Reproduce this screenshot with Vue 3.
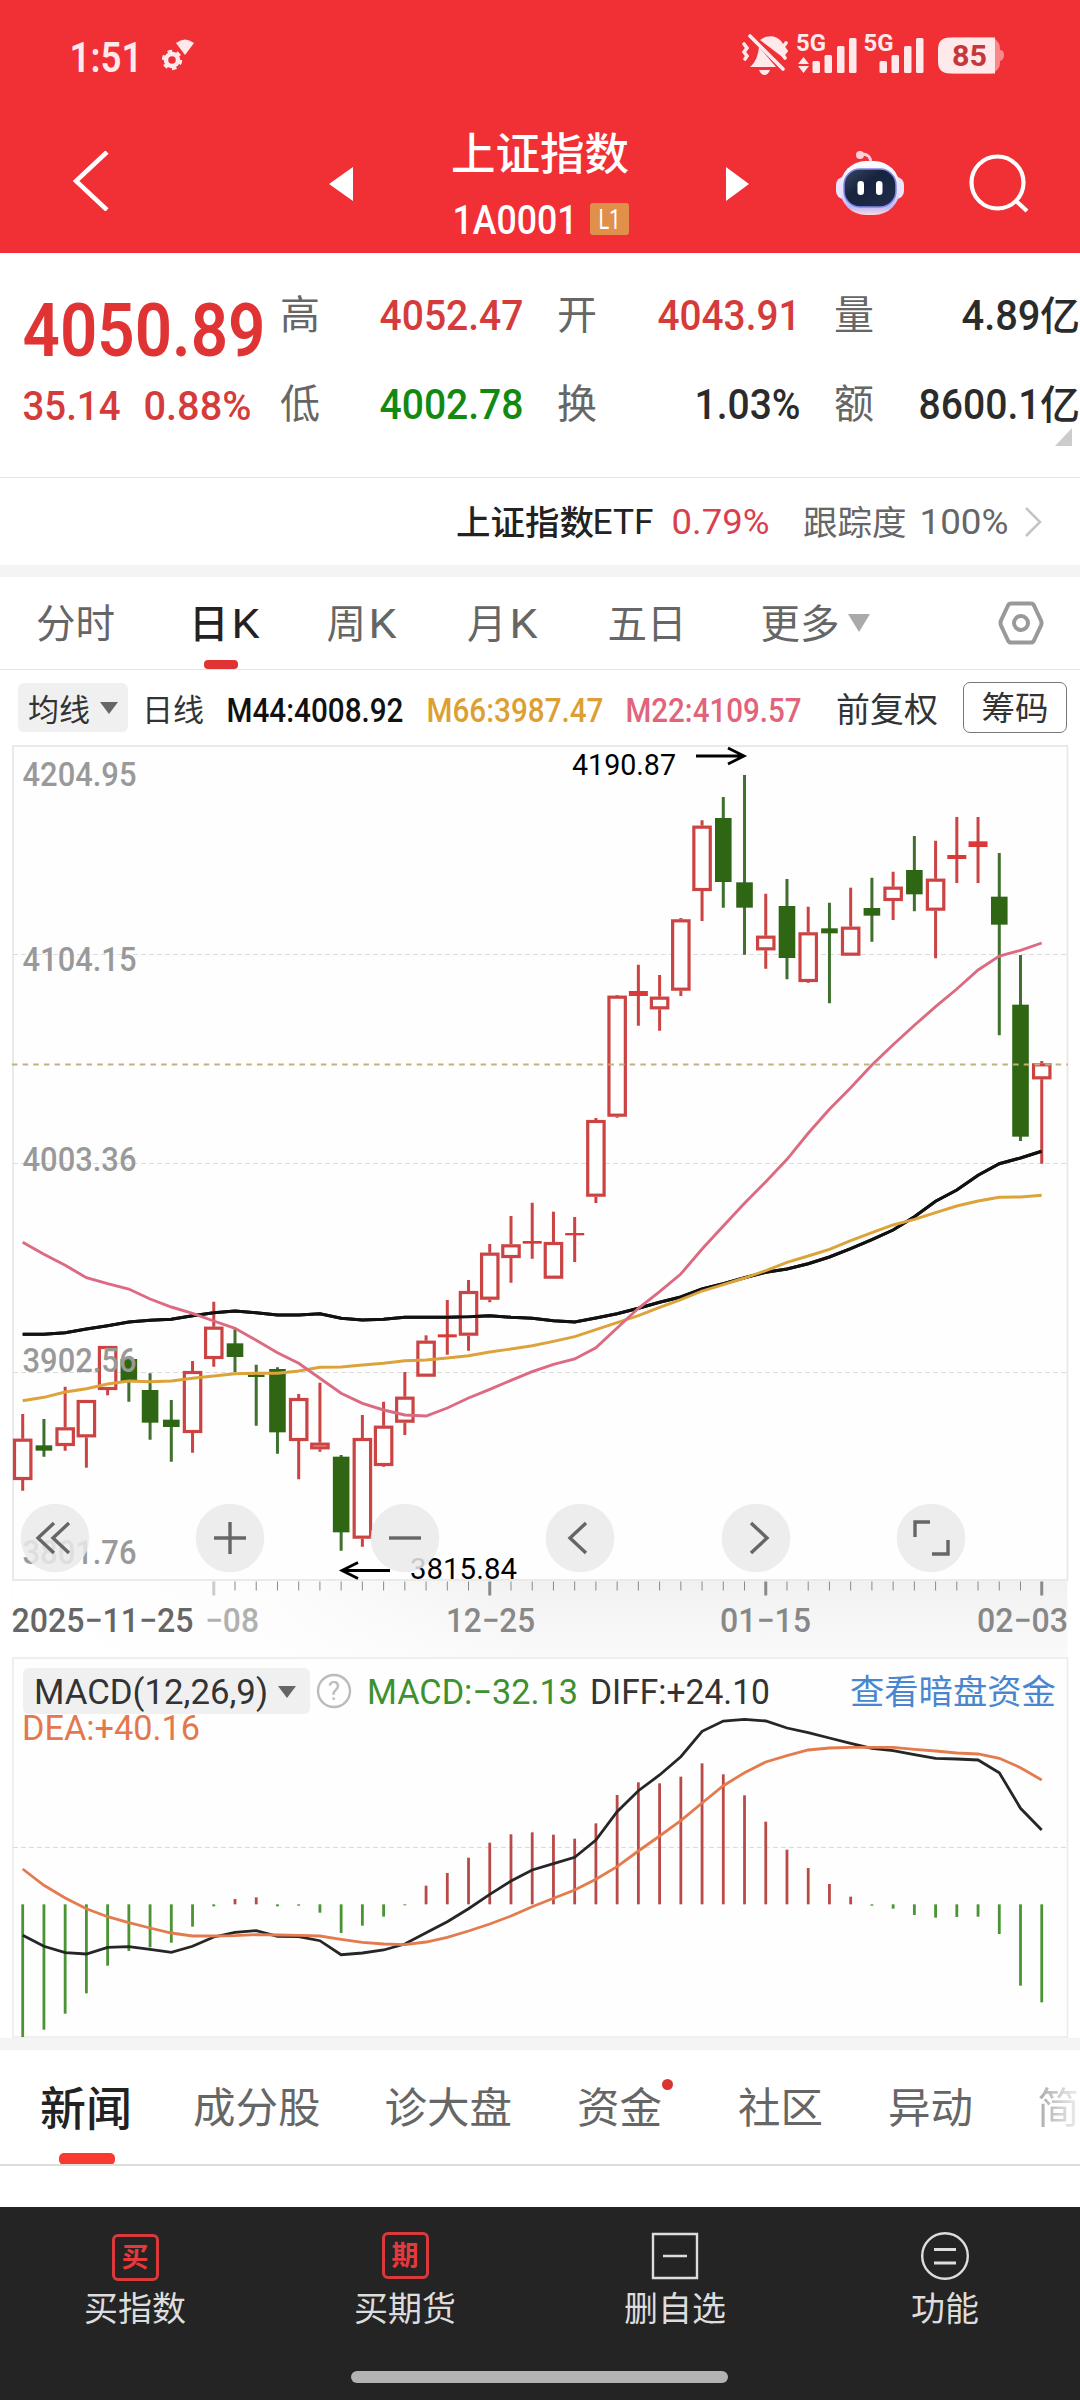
<script setup>
import { h } from 'vue'

/* Condensed figure: text set to an exact width and cap height. */
const Fig = (p) =>
  h('svg', { width: p.w, height: p.cap, class: 'fig' }, [
    h('text', {
      x: -1.5, y: p.cap, fill: 'currentColor',
      'font-size': p.cap / 0.711,
      'font-weight': p.weight || 500,
      textLength: p.w + 3, lengthAdjust: 'spacingAndGlyphs'
    }, p.t)
  ])
Fig.props = ['t', 'w', 'cap', 'weight']

const pitch = 21.23
const cx = (i) => 22.7 + i * pitch

/* kind, high, body top, body bottom, low (thirds of a pixel) */
const lower = [
  ['r', 642, 716, 840, 872], ['g', 657, 736, 752, 770], ['r', 560, 682, 738, 752], ['r', 600, 600, 712, 803],
  ['r', 438, 438, 570, 586], ['g', 477, 477, 545, 605], ['g', 520, 570, 668, 719], ['g', 600, 659, 681, 785],
  ['r', 483, 513, 699, 758], ['r', 305, 380, 477, 500], ['g', 388, 430, 471, 517], ['g', 494, 524, 531, 677],
  ['g', 502, 507, 697, 761], ['r', 582, 594, 723, 838], ['r', 548, 728, 748, 755], ['g', 765, 770, 997, 1052],
  ['r', 645, 714, 1016, 1040], ['r', 605, 677, 798, 800], ['r', 516, 590, 668, 705], ['r', 406, 422, 530, 530],
  ['r', 300, 403, 412, 464], ['r', 240, 273, 407, 452], ['r', 132, 158, 299, 307], ['r', 48, 133, 174, 248],
  ['r', 8, 123, 131, 176], ['r', 35, 126, 236, 236], ['r', 51, 99, 106, 186]
]
const upper = [
  ['r', 1134, 1140, 1370, 1389], ['r', 765, 767, 1130, 1133], ['r', 674, 753, 768, 857], ['r', 705, 770, 808, 872],
  ['r', 534, 538, 752, 768], ['r', 241, 257, 453, 543], ['g', 171, 234, 426, 503], ['g', 105, 427, 503, 644],
  ['r', 461, 587, 631, 686], ['g', 417, 498, 654, 718], ['r', 500, 577, 726, 728], ['g', 488, 565, 580, 790],
  ['r', 443, 560, 647, 647], ['g', 413, 504, 527, 605], ['r', 395, 440, 483, 540], ['g', 288, 390, 463, 514],
  ['r', 302, 416, 512, 655], ['r', 231, 345, 357, 429], ['r', 231, 304, 321, 429], ['g', 339, 470, 554, 886],
  ['g', 645, 794, 1190, 1203], ['r', 963, 970, 1018, 1271]
]
const scale = (rows, base) => rows.map(([k, ...v]) => [k, ...v.map((n) => base + n / 3)])
const candles = [...scale(lower, 1200), ...scale(upper, 740)].map(([k, hi, t, b, lo], i) => ({
  k, hi, t, b, lo, x: cx(i), hollow: k === 'r' && b - t > 6
}))

const line = (vals, base) => vals.map((v, i) => `${cx(i).toFixed(1)},${(base + v / 3).toFixed(1)}`).join(' ')
const m44 = line([403, 403, 398, 387, 377, 366, 361, 358, 347, 338, 333, 338, 345, 345, 341, 355, 360, 358, 352, 352, 352, 350, 347, 352, 355, 362, 366, 354, 341, 325, 307, 291, 267, 251, 233, 217, 207, 191, 171, 146, 119, 90, 50, 4, -30, -74, -109, -126, -146], 1200)
const m66 = line([602, 592, 576, 566, 552, 543, 545, 543, 535, 528, 521, 520, 520, 513, 502, 501, 495, 490, 482, 480, 474, 467, 456, 447, 437, 424, 410, 389, 368, 347, 322, 299, 273, 254, 234, 212, 187, 168, 148, 122, 98, 75, 58, 38, 18, 3, -8, -9, -14], 1200)
const m22 = line([127, 163, 196, 233, 251, 267, 297, 321, 340, 363, 385, 421, 458, 490, 535, 580, 610, 630, 645, 648, 624, 594, 568, 541, 515, 493, 477, 443, 384, 325, 275, 222, 147, 78, 10, -55, -122, -200, -272, -337, -405, -466, -524, -580, -633, -690, -732, -749, -771], 1200)

const bars = [1161, 1139, 1091, 1030, 947, 903, 892, 878, 830, 769, 747, 742, 769, 767, 788, 849, 827, 800, 765, 707, 669, 623, 578, 553, 547, 554, 566, 520, 435, 397, 400, 380, 340, 373, 436, 515, 599, 654, 702, 740, 767, 776, 795, 803, 801, 800, 852, 1007, 1057]
  .map((v, i) => ({ x: cx(i), y: Math.min(v, 763) / 3 + 1650, h: Math.max(Math.abs(v - 763) / 3, 1), up: v < 763 }))
const diff = line([856, 889, 908, 912, 892, 890, 898, 907, 889, 861, 847, 842, 859, 860, 872, 914, 909, 900, 882, 848, 815, 776, 733, 693, 660, 641, 622, 570, 485, 422, 375, 320, 244, 213, 208, 213, 234, 248, 264, 280, 295, 302, 314, 325, 327, 330, 368, 475, 540], 1650)
const dea = line([657, 706, 744, 776, 800, 818, 834, 849, 858, 858, 857, 854, 855, 856, 858, 868, 877, 882, 884, 876, 862, 843, 822, 798, 770, 745, 720, 688, 650, 603, 558, 512, 459, 407, 368, 336, 317, 300, 294, 292, 292, 292, 298, 303, 309, 312, 325, 353, 390], 1650)

const ticks = Array.from({ length: 40 }, (_, n) => n + 9).map((i) => ({ x: cx(i), big: (i - 9) % 13 === 0, pale: i === 9 }))
const grid = [954, 1163, 1372]
const scaleLabels = [
  { t: '4204.95', y: 786 }, { t: '4104.15', y: 971 }, { t: '4003.36', y: 1171 }, { t: '3902.56', y: 1371.5 }, { t: '3801.76', y: 1564 }
]
const controls = [
  'M54 -15 L38 0 L54 15 M69 -15 L53 0 L69 15',
  'M214 0 H246 M230 -16 V16',
  'M389 0 H421',
  'M586 -15 L570 0 L586 15',
  'M751 -15 L767 0 L751 15',
  'M915 -1 V-16 H930 M932 16 H948 V2'
]
const buttonX = [55, 230, 405, 580, 756, 931]
</script>

<template>
  <main class="screen">
    <header class="top">
      <div class="status">
        <Fig t="1:51" :w="70" :cap="30" weight="600" class="clock" />
        <svg class="gear" width="34" height="34" viewBox="0 0 34 34">
          <circle cx="10" cy="21" r="6" fill="none" stroke="#ffe9ea" stroke-width="4.5" />
          <circle cx="10" cy="21" r="8.7" fill="none" stroke="#ffe9ea" stroke-width="3" stroke-dasharray="4.5 4.6" />
          <path d="M14 4q9-7 18 0l-9 12z" fill="#ffe9ea" />
        </svg>
        <svg class="signals" width="270" height="46" viewBox="738 30 270 46" fill="#ffe9ea">
          <path d="M750 67c6-5 8-12 9-20l17 20zM760 40c13-9 25 0 25 12v7zM759 70h11q-2 5-5.500 5t-5.500-5z" />
          <path d="M750 36l33 33M744 44l3 4-3 4 3 4-2 3M786 43l-3 4 3 4-3 4 2 3" fill="none" stroke="#ffe9ea" stroke-width="3.600" stroke-linecap="round" />
          <text x="796" y="50.500" font-size="23" font-weight="700" textLength="30" lengthAdjust="spacingAndGlyphs">5G</text>
          <text x="863.500" y="50.500" font-size="23" font-weight="700" textLength="30" lengthAdjust="spacingAndGlyphs">5G</text>
          <path d="M798 64l5.500-7 5.500 7zM798 66l5.500 7 5.500-7z" />
          <g v-for="o in [0, 67]" :key="o">
            <rect :x="812.500 + o" y="61" width="7.500" height="12" rx="1.500" /><rect :x="824.500 + o" y="55" width="7.500" height="18" rx="1.500" />
            <rect :x="837 + o" y="46" width="7.500" height="27" rx="1.500" /><rect :x="849 + o" y="38" width="7.500" height="35" rx="1.500" />
          </g>
          <path d="M995 50h5q4 0 4 5t-4 6h-5z" fill="#f8888a" />
          <rect x="944" y="37.500" width="56" height="36" rx="11" fill="#f8888a" />
          <path d="M950 37.500h45v36h-45q-12 0-12-12v-12q0-12 12-12z" />
          <text x="952" y="66" font-size="30" font-weight="700" fill="#c4373c" textLength="35" lengthAdjust="spacingAndGlyphs">85</text>
        </svg>
      </div>
      <div class="nav">
        <svg class="back" width="36" height="60" viewBox="0 0 36 60"><path d="M34 1L3 30l31 29" fill="none" stroke="#fff" stroke-width="4.500" /></svg>
        <svg class="prev" width="24" height="34"><path d="M24 0v34L0 17z" fill="#fff" /></svg>
        <div class="title">
          <h1>上证指数</h1>
          <div class="code"><Fig t="1A0001" :w="122" :cap="29" /><span class="badge"><Fig t="L1" :w="19" :cap="19" weight="400" /></span></div>
        </div>
        <svg class="next" width="23" height="34"><path d="M0 0v34l23-17z" fill="#fff" /></svg>
        <svg class="robot" width="70" height="66" viewBox="0 0 70 66">
          <defs>
            <linearGradient id="shell" x1="0" y1="0" x2="0" y2="1"><stop offset="0" stop-color="#fff" /><stop offset=".6" stop-color="#e6defa" /><stop offset=".85" stop-color="#b9b8fa" /><stop offset="1" stop-color="#ffd9de" /></linearGradient>
            <linearGradient id="visor" x1="0" y1="0" x2="1" y2="1"><stop offset="0" stop-color="#3a4863" /><stop offset=".4" stop-color="#18243e" /><stop offset="1" stop-color="#202d4a" /></linearGradient>
          </defs>
          <path d="M25 4q11-1 11 10" fill="none" stroke="#f9d4e4" stroke-width="3" /><circle cx="25" cy="5" r="4" fill="#ffd0d8" />
          <rect x="1" y="27" width="68" height="22" rx="8" fill="#eae5ff" />
          <rect x="5" y="11" width="60" height="54" rx="26" fill="url(#shell)" />
          <rect x="9" y="19" width="52" height="38" rx="16" fill="url(#visor)" stroke="#8187e8" stroke-width="1.500" />
          <rect x="22.500" y="31" width="6.500" height="14" rx="3.200" fill="#fff" /><rect x="41" y="31" width="6.500" height="14" rx="3.200" fill="#fff" />
        </svg>
        <svg class="search" width="60" height="60" viewBox="0 0 60 60"><g fill="none" stroke="#fff" stroke-width="4.200"><circle cx="28.500" cy="28.500" r="26" /><path d="M46 46l12 11" /></g></svg>
      </div>
    </header>

    <section class="quote">
      <div class="price">
        <Fig t="4050.89" :w="240" :cap="53" weight="600" />
        <div class="chg"><Fig t="35.14" :w="95" :cap="29" /><Fig t="0.88%" :w="105" :cap="29" /></div>
      </div>
      <div class="cell"><span>高</span><Fig t="4052.47" :w="141" :cap="30" class="red" /></div>
      <div class="cell"><span>开</span><Fig t="4043.91" :w="140" :cap="30" class="red" /></div>
      <div class="cell last"><span>量</span><Fig t="4.89" :w="76" :cap="30" /><b>亿</b></div>
      <div class="cell"><span>低</span><Fig t="4002.78" :w="141" :cap="30" class="green" /></div>
      <div class="cell"><span>换</span><Fig t="1.03%" :w="103" :cap="30" /></div>
      <div class="cell last"><span>额</span><Fig t="8600.1" :w="119" :cap="30" /><b>亿</b></div>
      <svg class="corner" width="17" height="18"><path d="M17 0v18H0z" fill="#ccc" /></svg>
    </section>

    <section class="etf">
      <span class="name">上证指数</span><Fig t="ETF" :w="58" :cap="25" weight="400" class="name" />
      <Fig t="0.79%" :w="95" :cap="25" weight="400" class="rate" />
      <span class="track">跟踪度</span><Fig t="100%" :w="86" :cap="25" weight="400" />
      <svg class="more" width="17" height="30"><path d="M1 1l14 14L1 29" fill="none" stroke="#c4c4c4" stroke-width="2.500" /></svg>
    </section>

    <nav class="periods">
      <span class="p1"><em>分时</em></span>
      <span class="p2 on"><em>日</em><Fig t="K" :w="25" :cap="29" weight="400" /></span>
      <span class="p3"><em>周</em><Fig t="K" :w="25" :cap="29" weight="400" /></span>
      <span class="p4"><em>月</em><Fig t="K" :w="25" :cap="29" weight="400" /></span>
      <span class="p5"><em>五日</em></span>
      <span class="p6"><em>更多</em><svg width="22" height="18"><path d="M0 0h22L11 18z" fill="#aaa" /></svg></span>
      <svg class="hex" width="46" height="44" viewBox="0 0 46 44"><g fill="none" stroke="#999" stroke-width="4"><path d="M13 2.500h20q2 0 3 2l7 15q1 2.500 0 5l-7 15q-1 2-3 2H13q-2 0-3-2L3 24.500q-1-2.500 0-5l7-15q1-2 3-2z" /><circle cx="23" cy="22" r="7" /></g></svg>
    </nav>

    <section class="averages">
      <span class="drop">均线<svg width="18" height="12"><path d="M0 0h18L9 12z" fill="#666" /></svg></span>
      <span class="day">日线</span>
      <Fig t="M44:4008.92" :w="174" :cap="23" class="a44" />
      <Fig t="M66:3987.47" :w="174" :cap="23" class="a66" />
      <Fig t="M22:4109.57" :w="173" :cap="23" class="a22" />
      <span class="adj">前复权</span>
      <span class="chip">筹码</span>
    </section>

    <svg class="chart" width="1080" height="1306" viewBox="0 744 1080 1306">
      <defs>
        <linearGradient id="axis" x1="0" y1="0" x2="0" y2="1"><stop offset="0" stop-color="#f1f1f1" /><stop offset="1" stop-color="#fafafa" /></linearGradient>
        <linearGradient id="axisFade" x1="0" y1="0" x2="1" y2="0"><stop offset="0" stop-color="#fff" /><stop offset=".25" stop-color="#fff" stop-opacity=".8" /><stop offset=".5" stop-color="#fff" stop-opacity="0" /></linearGradient>
      </defs>
      <rect x="0" y="2038" width="1080" height="12" fill="#f4f4f4" />
      <rect x="12.500" y="1581" width="1055" height="76" fill="url(#axis)" />
      <rect x="12.500" y="1581" width="1055" height="76" fill="url(#axisFade)" />
      <rect x="13" y="746" width="1054.500" height="834" fill="#fefefe" stroke="#e8e8e8" stroke-width="1.800" />
      <path v-for="y in grid" :key="y" :d="`M13 ${y}.500H1067`" stroke="#dcdcdc" stroke-dasharray="5 3" />

      <polyline :points="m44" fill="none" stroke="#111" stroke-width="3" />
      <g v-for="(c, i) in candles" :key="i" :class="c.k">
        <path :d="`M${c.x} ${c.hi}V${c.hollow ? c.t : c.lo}M${c.x} ${c.b}V${c.lo}`" class="wick" />
        <rect v-if="c.hollow" :x="c.x - 8.200" :y="c.t + 1.500" width="16.400" :height="c.b - c.t - 3" class="hollow" />
        <rect v-else :x="c.x - (c.k === 'r' ? 9.500 : 8.300)" :y="c.t" :width="c.k === 'r' ? 19 : 16.600" :height="c.b - c.t" class="solid" />
      </g>
      <polyline :points="m44" fill="none" stroke="#111" stroke-width="3" />
      <polyline :points="m66" fill="none" stroke="#dba33a" stroke-width="2.900" />
      <polyline :points="m22" fill="none" stroke="#dc6a80" stroke-width="2.900" />
      <path d="M12 1064.500H1068" stroke="#c2b27c" stroke-width="1.800" stroke-dasharray="5.500 5.150" />

      <g fill="#999" font-weight="500" font-size="34">
        <text v-for="l in scaleLabels" :key="l.t" x="22.500" :y="l.y" textLength="114" lengthAdjust="spacingAndGlyphs">{{ l.t }}</text>
      </g>
      <g font-size="29.500" fill="#000">
        <text x="572" y="775" textLength="104" lengthAdjust="spacingAndGlyphs">4190.87</text>
        <text x="410" y="1579" textLength="107" lengthAdjust="spacingAndGlyphs">3815.84</text>
        <path d="M696 756h47M728 748l16 8-16 8M390 1570.500h-48M358 1562.500l-16 8 16 8" fill="none" stroke="#000" stroke-width="2.800" />
      </g>

      <circle v-for="x in buttonX" :key="x" :cx="x" cy="1538" r="34.300" fill="#eaeaea" fill-opacity=".85" />
      <path v-for="d in controls" :key="d" :d="d" transform="translate(0 1538)" fill="none" stroke="#666" stroke-width="3.400" />

      <path v-for="t in ticks" :key="t.x" :d="`M${t.x} 1581.500v${t.big ? 14 : 9}`" :stroke="t.pale ? '#ccc' : '#8a8a8a'" :stroke-width="t.big ? 3 : 1" />
      <g font-size="34" font-weight="500" fill="#888">
        <text x="205" y="1632" fill="#b0b0b0" textLength="54" lengthAdjust="spacingAndGlyphs">−08</text>
        <text x="11.500" y="1632" fill="#666" textLength="182" lengthAdjust="spacingAndGlyphs">2025−11−25</text>
        <text x="446" y="1632" textLength="89" lengthAdjust="spacingAndGlyphs">12−25</text>
        <text x="720" y="1632" textLength="91" lengthAdjust="spacingAndGlyphs">01−15</text>
        <text x="977" y="1632" textLength="91" lengthAdjust="spacingAndGlyphs">02−03</text>
      </g>

      <rect x="13" y="1658" width="1054.500" height="379" fill="#fefefe" stroke="#ebebeb" stroke-width="1.600" />
      <path d="M13 1847.500H1067" stroke="#dcdcdc" stroke-dasharray="5 3" />
      <rect v-for="b in bars" :key="b.x" :x="b.x - 1.400" :y="b.y" width="2.800" :height="b.h" :fill="b.up ? '#b94a48' : '#4a9433'" />
      <polyline :points="diff" fill="none" stroke="#262626" stroke-width="2.800" />
      <polyline :points="dea" fill="none" stroke="#e37b4d" stroke-width="2.800" />
      <rect x="23" y="1668" width="287" height="46" rx="6" fill="#f0f0f0" />
      <g font-size="35">
        <text x="34" y="1704" fill="#333" textLength="234" lengthAdjust="spacingAndGlyphs">MACD(12,26,9)</text>
        <text x="367" y="1704" fill="#3e9130" textLength="211" lengthAdjust="spacingAndGlyphs">MACD:−32.13</text>
        <text x="590" y="1704" fill="#333" textLength="180" lengthAdjust="spacingAndGlyphs">DIFF:+24.10</text>
        <text x="22" y="1740" fill="#e4774c" textLength="178" lengthAdjust="spacingAndGlyphs">DEA:+40.16</text>
      </g>
      <path d="M278 1686h18l-9 12z" fill="#666" />
      <circle cx="334" cy="1691" r="16" fill="none" stroke="#bbb" stroke-width="2.400" />
      <text x="334" y="1700" font-size="26" fill="#bbb" text-anchor="middle">?</text>
      <text x="850" y="1703.500" font-size="34.300" class="cjk" fill="#4a86d0">查看暗盘资金</text>
    </svg>

    <nav class="topics">
      <span class="t1 on">新闻</span><span class="t2">成分股</span><span class="t3">诊大盘</span>
      <span class="t4">资金<i /></span><span class="t5">社区</span><span class="t6">异动</span><span class="t7">简</span>
    </nav>

    <footer class="dock">
      <div class="actions">
        <div class="act"><span class="seal low">买</span>买指数</div>
        <div class="act"><span class="seal">期</span>买期货</div>
        <div class="act"><svg width="48" height="48"><path d="M2 2h44v44H2zM12 24h24" fill="none" stroke="#ddd" stroke-width="2.400" /></svg>删自选</div>
        <div class="act"><svg width="50" height="48"><g fill="none" stroke="#ddd" stroke-width="2.400"><circle cx="25" cy="24" r="22.800" /><path d="M14 17.500h22M14 31h22" stroke-width="3" /></g></svg>功能</div>
      </div>
      <div class="home" />
    </footer>
  </main>
</template>

<style>
body { background: #fff; }
svg text { font-family: Roboto, "Noto Sans CJK SC", sans-serif; }
svg text.cjk { font-family: "Noto Sans CJK SC", sans-serif; }
</style>

<style scoped>
.screen { width: 1080px; height: 2400px; overflow: hidden; box-sizing: border-box; background: #fff; color: #333; font-family: "Noto Sans CJK SC", sans-serif; display: flex; flex-direction: column; }
.screen > * { flex: none; }
svg { display: block; flex: none; }
.fig { overflow: visible; }
.top { height: 253px; background: #f13036; color: #fff; }
.status { height: 106px; display: flex; align-items: flex-start; }
.clock { margin: 42px 0 0 71px; color: #ffe9ea; }
.gear { margin: 39px 0 0 21px; }
.signals { margin: 30px 0 0 542px; }
.nav { display: flex; height: 147px; align-items: flex-start; }
.back { margin: 45px 0 0 73px; }
.prev { margin: 61px 0 0 220px; }
.title { width: 180px; margin-left: 98px; }
h1 { margin: 20px 0 0; font-size: 44.500px; line-height: 50px; font-weight: 500; white-space: nowrap; }
.code { display: flex; align-items: center; gap: 14px; height: 34px; margin: 26px 0 0 3px; }
.badge { width: 39px; height: 32px; border-radius: 3px; background: #e0904a; display: flex; align-items: center; justify-content: center; }
.next { margin: 61px 0 0 95px; }
.robot { margin: 44px 0 0 86px; }
.search { margin: 48px 0 0 64px; }

.quote { height: 225px; position: relative; box-sizing: border-box; border-bottom: 1px solid #e4e4e4; display: grid; grid-template-columns: 281px 277px 277px 245px; grid-template-rows: 89px 89px; padding-top: 17px; }
.price { grid-row: 1 / 3; padding: 33px 0 0 24px; color: #e03434; }
.chg { display: flex; gap: 26px; margin-top: 35px; color: #d63b3b; }
.cell { display: flex; align-items: center; justify-content: space-between; padding-right: 36px; font-size: 40px; line-height: 52px; color: #2b2b2b; }
.cell span { color: #666; margin-top: -6px; margin-left: -1px; }
.cell b { font-weight: 500; margin-top: -4px; }
.cell.last { padding-right: 0; }
.cell.last .fig { margin-left: auto; margin-right: 1px; }
.red { color: #d63b3b; }
.green { color: #128a12; }
.corner { position: absolute; right: 8px; bottom: 31px; }

.etf { height: 99px; box-sizing: border-box; border-bottom: 12px solid #f4f4f4; display: flex; align-items: center; font-size: 34.500px; color: #666; }
.etf > span { line-height: 46px; margin-top: -3px; }
.etf > span.name { margin-left: 456px; font-weight: 500; }
.name { color: #222; }
.rate { margin-left: 21px; color: #d8404f; }
.track { margin-left: 35px; }
.track + svg { margin-left: 14px; }
.more { margin-left: 18px; }

.periods { height: 93px; box-sizing: border-box; border-bottom: 1px solid #e4e4e4; display: flex; align-items: center; font-size: 39.500px; line-height: 56px; color: #666; }
.periods span { display: flex; align-items: center; flex: none; position: relative; }
.periods em { font-style: normal; margin-top: -4px; }
.periods span .fig { margin-left: 4px; }
.p1 { margin-left: 36px; }
.p2 { margin-left: 74px; color: #222; font-weight: 500; }
.p2::after { content: ""; position: absolute; left: 15px; bottom: -20px; width: 34px; height: 9px; border-radius: 4px; background: #e03434; }
.p3 { margin-left: 69px; }
.p4 { margin-left: 72px; }
.p5 { margin-left: 72px; }
.p6 { margin-left: 74px; gap: 8px; }
.hex { margin-left: 128px; }

.averages { height: 74px; display: flex; align-items: center; font-size: 31px; line-height: 44px; color: #333; padding-top: 1px; box-sizing: border-box; }
.averages > * { flex: none; }
.drop { margin-left: 18px; width: 110px; height: 49px; border-radius: 6px; background: #f0f0f0; display: flex; align-items: center; justify-content: center; gap: 10px; }
.day { margin-left: 14px; }
.averages > .fig { position: relative; top: 3px; }
.a44 { margin-left: 24px; color: #111; }
.a66 { margin-left: 26px; color: #dd9f34; }
.a22 { margin-left: 25px; color: #e0647a; }
.adj { margin-left: 36px; font-size: 34px; }
.chip { margin-left: 25px; width: 102px; height: 49px; border: 1.500px solid #777; border-radius: 7px; text-align: center; font-size: 33.500px; line-height: 46px; }

.topics { height: 116px; box-sizing: border-box; border-bottom: 2px solid #dcdcdc; display: flex; align-items: center; font-size: 42.500px; line-height: 60px; color: #666; overflow: hidden; }
.topics span { position: relative; flex: none; top: -2px; }
.t1 { margin-left: 40px; font-size: 46px; font-weight: 500; color: #222; }
.t1::after { content: ""; position: absolute; left: 19px; bottom: -30px; width: 56px; height: 12px; border-radius: 5px; background: #f83a30; }
.t2 { margin-left: 61px; }
.t3 { margin-left: 64px; }
.t4 { margin-left: 65px; }
.t4 i { position: absolute; right: -11px; top: 4px; width: 11px; height: 11px; border-radius: 50%; background: #d83434; }
.t5 { margin-left: 76px; }
.t6 { margin-left: 65px; }
.t7 { margin-left: 64px; color: transparent; background: linear-gradient(90deg, #aaa, #f0f0f0); background-clip: text; }

.dock { height: 193px; margin-top: 41px; background: #242424; color: #ddd; }
.actions { display: flex; height: 164px; }
.act { flex: 1; display: flex; flex-direction: column; align-items: center; padding-top: 25px; box-sizing: border-box; font-size: 34px; line-height: 50px; gap: 1px; }
.act svg, .seal { margin-bottom: 2px; }
.act svg { height: 48px; margin-bottom: 1px; }
.seal { width: 47px; height: 47px; box-sizing: border-box; border: 3px solid #d9393b; border-radius: 6px; color: #e8383b; font-size: 27px; line-height: 38px; font-weight: 700; text-align: center; }
.seal.low { margin-top: 2px; margin-bottom: 0; }
.home { width: 377px; height: 12px; margin: 0 0 0 351px; border-radius: 6px; background: #b3b3b3; }

.wick { fill: none; stroke-width: 3; }
.r .wick, .r .hollow { stroke: #cb4342; }
.r .hollow { fill: #fff; stroke-width: 3.200; }
.r .solid { fill: #d93a39; }
.g .wick { stroke: #3f7030; }
.g .solid { fill: #2f6614; }
</style>
